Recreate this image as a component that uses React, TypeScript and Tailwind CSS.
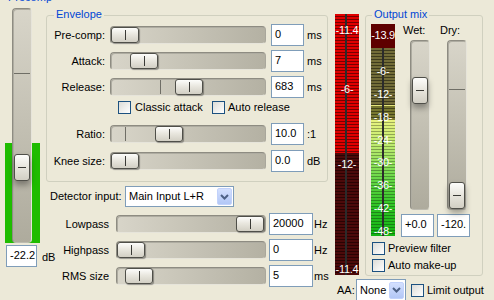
import React from "react";

function Thumb({ pos }: { pos: string }) {
  return (
    <div
      className={`absolute top-0 h-[16px] w-[28px] rounded-[3px] border border-[#4f4f49] bg-[linear-gradient(to_bottom,#fdfdfb,#e9e7df_45%,#d2cfc4)] shadow-[1px_1px_1px_rgba(0,0,0,0.35)] ${pos}`}
    >
      <div className="absolute bottom-[2px] left-[13px] top-[2px] w-px bg-[#3a3a36]" />
    </div>
  );
}

function HTrack({ className, thumb, marker }: { className: string; thumb: string; marker?: string }) {
  return (
    <div
      className={`relative h-[18px] shrink-0 rounded-[4px] border border-[#8e8c82] border-b-[#e6e4da] border-r-[#a9a79c] bg-[linear-gradient(to_right,#d8d5c9,#b4b1a3)] shadow-[inset_1px_1px_0_#aeaca1] ${className}`}
    >
      {marker && <div className={`absolute bottom-[1px] top-[1px] w-px bg-[#6f6e66] ${marker}`} />}
      <Thumb pos={thumb} />
    </div>
  );
}

function VTrack({ className, thumb, marker }: { className: string; thumb: string; marker?: string }) {
  return (
    <div
      className={`relative shrink-0 rounded-[4px] border border-[#8e8c82] border-b-[#bdbbb0] border-r-[#e6e4da] bg-[linear-gradient(to_bottom,#d8d5c9,#aeab9d)] shadow-[inset_1px_1px_0_#aeaca1] ${className}`}
    >
      {marker && <div className={`absolute left-[1px] right-[1px] h-px bg-[#6f6e66] ${marker}`} />}
      <div
        className={`absolute left-[1px] h-[27px] w-[16px] rounded-[3px] border border-[#4f4f49] bg-[linear-gradient(to_bottom,#fdfdfb,#e9e7df_45%,#d2cfc4)] shadow-[0_4px_6px_rgba(0,0,0,0.35)] ${thumb}`}
      >
        <div className="absolute left-[3px] right-[3px] top-[12px] h-px bg-[#3a3a36]" />
      </div>
    </div>
  );
}

function Input({ className, children }: { className: string; children: React.ReactNode }) {
  return (
    <div
      className={`flex shrink-0 items-start whitespace-nowrap border border-[#7f9db9] bg-white pl-[3px] pt-[3px] leading-[13px] ${className}`}
    >
      {children}
    </div>
  );
}

function Check({ className = "" }: { className?: string }) {
  return (
    <div
      className={`h-[13px] w-[13px] shrink-0 border border-[#1c5180] bg-[linear-gradient(135deg,#dcdcd7,#ffffff)] ${className}`}
    />
  );
}

function Chevron() {
  return (
    <svg width="9" height="6" viewBox="0 0 9 6">
      <path d="M1 1 L4.5 4.5 L8 1" fill="none" stroke="#4d6185" strokeWidth="2" />
    </svg>
  );
}

function Select({ className, children }: { className: string; children: React.ReactNode }) {
  return (
    <div
      className={`flex shrink-0 items-center whitespace-nowrap border border-[#7f9db9] bg-white pl-[3px] ${className}`}
    >
      <span>{children}</span>
      <div className="ml-auto mr-[1px] flex h-[17px] w-[15px] items-center justify-center rounded-[2px] border border-[#c2d2fb] bg-[linear-gradient(to_bottom,#d4e0fe,#b2c7f6)]">
        <Chevron />
      </div>
    </div>
  );
}

function MeterLabel({ className, children }: { className: string; children: React.ReactNode }) {
  return (
    <span
      className={`absolute left-[-6px] right-[-6px] text-center text-[11px] leading-[13px] tracking-[-0.3px] text-white ${className}`}
    >
      {children}
    </span>
  );
}

function Row({
  label,
  track,
  value,
  unit,
  className = "",
}: {
  label: string;
  track: React.ReactNode;
  value: string;
  unit: string;
  className?: string;
}) {
  return (
    <div className={`flex h-[22px] items-center ${className}`}>
      <span className="w-[58px] shrink-0 whitespace-nowrap text-right">{label}</span>
      {track}
      <Input className="ml-[5px] h-[22px] w-[33px]">{value}</Input>
      <span className="ml-[3px]">{unit}</span>
    </div>
  );
}

function LowRow({
  label,
  track,
  value,
  unit,
  className = "",
}: {
  label: string;
  track: React.ReactNode;
  value: string;
  unit: string;
  className?: string;
}) {
  return (
    <div className={`flex h-[22px] items-center ${className}`}>
      <span className="w-[63px] shrink-0 whitespace-nowrap text-right">{label}</span>
      {track}
      <Input className="ml-[3px] h-[22px] w-[44px]">{value}</Input>
      <span className="ml-[1px]">{unit}</span>
    </div>
  );
}

export default function App() {
  return (
    <div className="relative flex h-[300px] w-[494px] overflow-hidden bg-[#ece9d8] font-['Liberation_Sans',Arial,sans-serif] text-[11px] leading-[13px] text-black">
      <span className="absolute left-[8px] top-[-9px] text-[#0046d5]">Precomp</span>

      {/* left column */}
      <div className="flex w-[46px] shrink-0 flex-col pt-[8px]">
        <div className="ml-[5px] h-[235px] w-[35px] bg-[linear-gradient(to_bottom,transparent_135px,#1fbc00_135px)]">
          <VTrack className="ml-[7px] h-[235px] w-[20px]" thumb="top-[145px]" marker="top-[64px]" />
        </div>
        <div className="ml-[6px] mt-[2px] flex items-center">
          <Input className="h-[22px] w-[31px]">-22.2</Input>
          <span className="ml-[5px] mt-[3px] whitespace-nowrap">dB</span>
        </div>
      </div>

      {/* middle column */}
      <div className="flex w-[282px] shrink-0 flex-col">
        <div className="relative mt-[15px] h-[167px] rounded-[3px] border border-[#d0d0bf] pt-[8px]">
          <span className="absolute left-[7px] top-[-8px] bg-[#ece9d8] px-[2px] text-[#0046d5]">Envelope</span>
          <Row
            label="Pre-comp:"
            track={<HTrack className="ml-[5px] w-[156px]" thumb="left-0" />}
            value="0"
            unit="ms"
          />
          <Row
            className="mt-[4px]"
            label="Attack:"
            track={<HTrack className="ml-[5px] w-[156px]" thumb="left-[19px]" />}
            value="7"
            unit="ms"
          />
          <Row
            className="mt-[4px]"
            label="Release:"
            track={<HTrack className="ml-[5px] w-[156px]" thumb="left-[64px]" marker="left-[49px]" />}
            value="683"
            unit="ms"
          />
          <div className="mt-[2px] flex h-[14px] items-center">
            <div className="ml-[71px] flex w-[94px] items-center">
              <Check />
              <span className="ml-[4px] whitespace-nowrap">Classic attack</span>
            </div>
            <div className="flex items-center">
              <Check />
              <span className="ml-[3px] whitespace-nowrap">Auto release</span>
            </div>
          </div>
          <Row
            className="mt-[9px]"
            label="Ratio:"
            track={<HTrack className="ml-[5px] w-[156px]" thumb="left-[44px]" marker="left-[14px]" />}
            value="10.0"
            unit=":1"
          />
          <Row
            className="mt-[5px]"
            label="Knee size:"
            track={<HTrack className="ml-[5px] w-[156px]" thumb="left-0" />}
            value="0.0"
            unit="dB"
          />
        </div>

        <div className="mt-[4px] flex h-[21px] items-center">
          <span className="ml-[4px] w-[75px] shrink-0 whitespace-nowrap">Detector input:</span>
          <Select className="h-[21px] w-[109px]">Main Input L+R</Select>
        </div>

        <LowRow
          className="mt-[6px]"
          label="Lowpass"
          track={<HTrack className="ml-[7px] w-[150px]" thumb="left-[119px]" />}
          value="20000"
          unit="Hz"
        />
        <LowRow
          className="mt-[4px]"
          label="Highpass"
          track={<HTrack className="ml-[7px] w-[150px]" thumb="left-0" />}
          value="0"
          unit="Hz"
        />
        <LowRow
          className="mt-[4px]"
          label="RMS size"
          track={<HTrack className="ml-[7px] w-[150px]" thumb="left-[8px]" />}
          value="5"
          unit="ms"
        />
      </div>

      {/* right part */}
      <div className="flex flex-col">
        <div className="flex pt-[14px]">
          {/* red meter */}
          <div className="relative ml-[7px] flex h-[261px] w-[24px] shrink-0 flex-col">
            <div className="h-[139px] bg-[repeating-linear-gradient(to_bottom,#e00000_0px,#e00000_2px,#760000_2px,#760000_3px)]" />
            <div className="flex-1 bg-[repeating-linear-gradient(to_bottom,#4c0a0a_0px,#4c0a0a_2px,#2a0303_2px,#2a0303_3px)]" />
            <div className="absolute inset-y-0 left-[10px] w-[2px] bg-[#2b2b2b]" />
            <MeterLabel className="top-[10px]">-11.4</MeterLabel>
            <MeterLabel className="top-[69px]">-6-</MeterLabel>
            <MeterLabel className="top-[144px]">-12-</MeterLabel>
            <MeterLabel className="top-[249px]">-11.4</MeterLabel>
          </div>

          {/* output mix group */}
          <div className="relative ml-[6px] mt-[1px] h-[261px] w-[118px] shrink-0 rounded-[3px] border border-[#d0d0bf] pl-[5px] pt-[8px]">
            <span className="absolute left-[6px] top-[-8px] whitespace-nowrap bg-[#ece9d8] px-[2px] text-[#0046d5]">
              Output mix
            </span>
            <div className="flex">
              <div className="relative flex h-[212px] w-[24px] shrink-0 flex-col">
                <div className="h-[24px] bg-[#5e0000]" />
                <div className="h-[57px] bg-[repeating-linear-gradient(to_bottom,#726c38_0px,#726c38_2px,#3e3b1d_2px,#3e3b1d_3px)]" />
                <div className="h-px bg-[#e4e47c]" />
                <div className="h-[14px] bg-[repeating-linear-gradient(to_bottom,#78782f_0px,#78782f_2px,#44441b_2px,#44441b_3px)]" />
                <div className="flex-1 bg-[image:repeating-linear-gradient(to_bottom,transparent_0px,transparent_2px,rgba(0,0,0,0.3)_2px,rgba(0,0,0,0.3)_3px),linear-gradient(to_bottom,#e8f27e,#b6ea6c_25%,#6ad848_50%,#2ec424_75%,#14b414)]" />
                <div className="absolute bottom-0 left-[11px] top-[24px] w-[2px] bg-[#2b2b2b]" />
                <MeterLabel className="top-[5px]">-13.9</MeterLabel>
                <MeterLabel className="top-[41px]">-6-</MeterLabel>
                <MeterLabel className="top-[64px]">-12-</MeterLabel>
                <MeterLabel className="top-[87px]">-18-</MeterLabel>
                <MeterLabel className="top-[110px]">-24-</MeterLabel>
                <MeterLabel className="top-[132px]">-30-</MeterLabel>
                <MeterLabel className="top-[155px]">-36-</MeterLabel>
                <MeterLabel className="top-[178px]">-42-</MeterLabel>
                <MeterLabel className="top-[201px]">-48-</MeterLabel>
              </div>
              <div className="ml-[6px] flex w-[33px] shrink-0 flex-col">
                <span className="ml-[2px] h-[13px]">Wet:</span>
                <VTrack className="ml-[9px] mt-[3px] h-[170px] w-[20px]" thumb="top-[36px]" />
                <Input className="mt-[4px] h-[23px] w-[33px]">+0.0</Input>
              </div>
              <div className="ml-[3px] flex w-[33px] shrink-0 flex-col">
                <span className="ml-[3px] h-[13px]">Dry:</span>
                <VTrack className="ml-[10px] mt-[3px] h-[170px] w-[20px]" thumb="top-[141px]" marker="top-[48px]" />
                <Input className="mt-[4px] h-[23px] w-[33px]">-120.</Input>
              </div>
            </div>
            <div className="ml-[1px] mt-[5px] flex h-[13px] items-center">
              <Check />
              <span className="ml-[3px] whitespace-nowrap">Preview filter</span>
            </div>
            <div className="ml-[1px] mt-[4px] flex h-[13px] items-center">
              <Check />
              <span className="ml-[3px] whitespace-nowrap">Auto make-up</span>
            </div>
          </div>
        </div>

        <div className="mt-[3px] flex h-[22px] items-center">
          <span className="ml-[9px] w-[19px] shrink-0">AA:</span>
          <Select className="h-[22px] w-[50px]">None</Select>
          <Check className="ml-[5px]" />
          <span className="ml-[3px] whitespace-nowrap">Limit output</span>
        </div>
      </div>
    </div>
  );
}
